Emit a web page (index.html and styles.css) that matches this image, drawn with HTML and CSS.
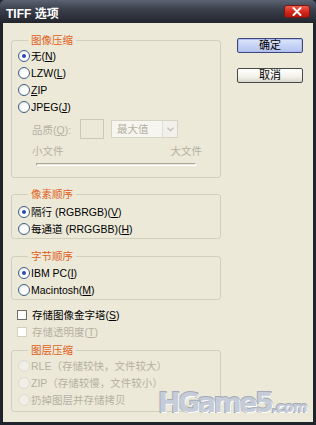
FILE: index.html
```html
<!DOCTYPE html>
<html lang="zh-CN">
<head>
  <meta charset="UTF-8">
  <title>TIFF 选项</title>
  <link rel="stylesheet" href="styles.css">
</head>
<body>

  <div class="window">
    <!-- 标题栏 -->
    <div class="titlebar">
      <span class="title">TIFF 选项</span>
      <span class="close">
        <svg width="10" height="9" viewBox="0 0 10 9"><path d="M1.5 1 L8.5 8 M8.5 1 L1.5 8" stroke="#fff" stroke-width="2" stroke-linecap="round"/></svg>
      </span>
    </div>

    <div class="content">
      <div class="options">

        <fieldset class="group g-compress">
          <legend>图像压缩</legend>
          <div class="row"><span class="radio on"></span>无(<u>N</u>)</div>
          <div class="row"><span class="radio"></span>LZW(<u>L</u>)</div>
          <div class="row"><span class="radio"></span><u>Z</u>IP</div>
          <div class="row"><span class="radio"></span>JPEG(<u>J</u>)</div>
          <div class="quality">
            <span class="dim">品质(<u>Q</u>):</span>
            <span class="qbox"></span>
            <span class="select"><span class="sel-text">最大值</span><span class="sel-arrow">
              <svg width="7" height="5" viewBox="0 0 7 5"><path d="M0.5 0.8 L3.5 3.8 L6.5 0.8" fill="none" stroke="#c2c2b8" stroke-width="1.3"/></svg>
            </span></span>
          </div>
          <div class="scale dim"><span>小文件</span><span>大文件</span></div>
          <div class="slider"></div>
        </fieldset>

        <fieldset class="group g-order">
          <legend>像素顺序</legend>
          <div class="row"><span class="radio on"></span>隔行 (RGBRGB)(<u>V</u>)</div>
          <div class="row"><span class="radio"></span>每通道 (RRGGBB)(<u>H</u>)</div>
        </fieldset>

        <fieldset class="group g-byte">
          <legend>字节顺序</legend>
          <div class="row"><span class="radio on"></span>IBM PC(<u>I</u>)</div>
          <div class="row"><span class="radio"></span>Macintosh(<u>M</u>)</div>
        </fieldset>

        <div class="checks">
          <div class="row"><span class="check"></span>存储图像金字塔(<u>S</u>)</div>
          <div class="row dim"><span class="check off"></span>存储透明度(<u>T</u>)</div>
        </div>

        <fieldset class="group g-layer">
          <legend>图层压缩</legend>
          <div class="row dim"><span class="radio off"></span>RLE（存储较快，文件较大）</div>
          <div class="row dim"><span class="radio off"></span>ZIP（存储较慢，文件较小）</div>
          <div class="row dim"><span class="radio off"></span>扔掉图层并存储拷贝</div>
        </fieldset>

      </div>

      <div class="buttons">
        <button class="btn default">确定</button>
        <button class="btn">取消</button>
      </div>
    </div>

    <div class="watermark">HGame5<span class="dotcom">.com</span></div>
  </div>

</body>
</html>
```

FILE: styles.css
```css
* {
  box-sizing: border-box;
}

body {
  margin: 0;
  width: 316px;
  height: 425px;
  overflow: hidden;
  font-family: "Liberation Sans", "Noto Sans CJK SC", sans-serif;
  font-size: 10.5px;
  color: #000;
  background: #1c1f27;
}

u {
  text-decoration: underline;
  text-underline-offset: 1px;
}

.window {
  position: relative;
  width: 316px;
  height: 425px;
  display: flex;
  flex-direction: column;
  background: #20232b;
  padding: 0 3px 3px 3px;
}

/* Title bar */
.titlebar {
  height: 23px;
  margin: 0 -3px;
  padding: 0 6px 0 6px;
  display: flex;
  align-items: center;
  justify-content: space-between;
  background: linear-gradient(#5b6271 0%, #3b404c 40%, #22252d 100%);
  border-radius: 5px 5px 0 0;
}

.title {
  color: #fff;
  font-weight: bold;
  font-size: 12px;
  padding-top: 1px;
}

.close {
  width: 26px;
  height: 13px;
  display: flex;
  align-items: center;
  justify-content: center;
  border-radius: 3px;
  border: 1px solid #7a1a14;
  background: linear-gradient(#f05a4a, #d3261b 55%, #b8160e);
}

/* Dialog body */
.content {
  flex: 1;
  display: flex;
  background: #ece9d8;
  padding: 10px 0 0 8px;
}

.options {
  width: 210px;
}

.group {
  margin: 0;
  padding: 0 6px 0 6px;
  border: 1px solid #d0d0bf;
  border-radius: 3px;
  min-width: 0;
}

.group legend {
  margin-left: 10px;
  padding: 0 3px;
  color: #e0601a;
  font-size: 10.5px;
  line-height: 14px;
}

.row {
  height: 17px;
  display: flex;
  align-items: center;
  white-space: nowrap;
}

.dim {
  color: #b4b1a2;
}

.radio {
  width: 12px;
  height: 12px;
  border-radius: 50%;
  border: 1px solid #3f5f86;
  background: radial-gradient(circle at 60% 60%, #fff 30%, #e3e2da 100%);
  margin-right: 1px;
  flex: none;
  display: flex;
  align-items: center;
  justify-content: center;
}

.radio.on::after {
  content: "";
  width: 4px;
  height: 4px;
  border-radius: 50%;
  background: #2d4bb0;
}

.radio.off {
  border-color: #dcdacd;
  background: #f1efe5;
}

.quality {
  display: flex;
  align-items: center;
  margin: 4px 0 0 14px;
  height: 20px;
}

.qbox {
  width: 24px;
  height: 20px;
  border: 1px solid #c9c7b8;
  background: #ece9d8;
  margin-left: 9px;
}

.select {
  display: flex;
  width: 67px;
  height: 18px;
  margin-left: 7px;
  border: 1px solid #d6d4c7;
  background: #f6f5ef;
}

.sel-text {
  flex: 1;
  color: #b4b1a2;
  padding-left: 5px;
  line-height: 16px;
}

.sel-arrow {
  width: 15px;
  border-left: 1px solid #e2e0d5;
  display: flex;
  align-items: center;
  justify-content: center;
  background: #f1f0ea;
}

.scale {
  display: flex;
  justify-content: space-between;
  margin: 5px 12px 0 14px;
  line-height: 14px;
}

.slider {
  height: 3px;
  margin: 5px 18px 11px 18px;
  border-top: 1px solid #a9a798;
  border-bottom: 1px solid #fff;
  border-left: 1px solid #a9a798;
  border-right: 1px solid #fff;
}

.g-order {
  margin-top: 9px;
  padding-top: 2px;
  padding-bottom: 1px;
}

.g-byte {
  margin-top: 10px;
  padding-top: 1px;
  padding-bottom: 1px;
}

.checks {
  margin: 6px 0 0 6px;
}

.check {
  width: 10px;
  height: 10px;
  border: 1px solid #6f6f66;
  background: #fff;
  margin: 0 5px 0 0;
  flex: none;
}

.check.off {
  border-color: #d3d1c4;
}

.g-layer {
  margin-top: 3px;
  padding-top: 0;
  padding-bottom: 3px;
}

/* Buttons */
.buttons {
  display: flex;
  flex-direction: column;
  gap: 15px;
  margin: 5px 0 0 16px;
}

.btn {
  width: 66px;
  height: 15px;
  padding: 0;
  font-family: "Liberation Sans", "Noto Sans CJK SC", sans-serif;
  font-size: 11px;
  line-height: 13px;
  color: #000;
  border: 1px solid #4a4a44;
  border-radius: 2px;
  background: linear-gradient(#ffffff, #f2f1ea 60%, #d8d6cc);
}

.btn.default {
  border-color: #3f4a7a;
  background: linear-gradient(#dfe6fb, #c7d3f5 50%, #b5c3ee);
  box-shadow: inset 0 0 0 1px #aebcf0;
}

/* Watermark */
.watermark {
  position: absolute;
  right: 9px;
  bottom: 9px;
  font-family: "DejaVu Sans", sans-serif;
  font-weight: bold;
  font-size: 27px;
  letter-spacing: -2.5px;
  color: #c6ccd7;
  -webkit-text-stroke: 2px #a3abb8;
  paint-order: stroke fill;
  text-shadow: 1px 1px 0 #fff;
  line-height: 1;
}

.dotcom {
  font-size: 14px;
  letter-spacing: -0.5px;
}
```
